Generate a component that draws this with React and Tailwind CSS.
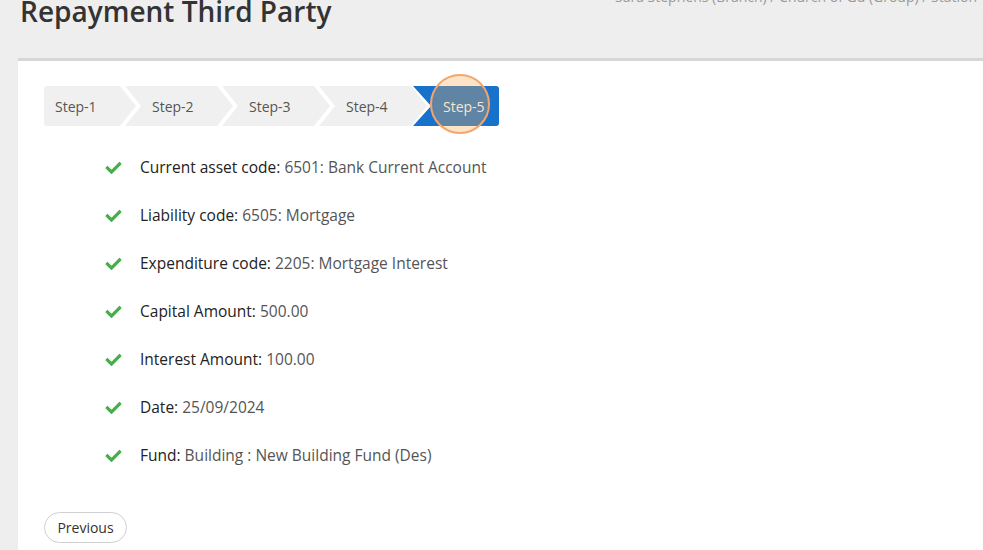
import React from "react";
import { FaCheck } from "react-icons/fa";

const rows = [
  ["Current asset code:", "6501: Bank Current Account"],
  ["Liability code:", "6505: Mortgage"],
  ["Expenditure code:", "2205: Mortgage Interest"],
  ["Capital Amount:", "500.00"],
  ["Interest Amount:", "100.00"],
  ["Date:", "25/09/2024"],
  ["Fund:", "Building : New Building Fund (Des)"],
];

export default function App() {
  return (
    <div
      className="w-[983px] h-[550px] overflow-hidden bg-[#efeeee] flex flex-col"
      style={{ fontFamily: '"Open Sans", "Liberation Sans", sans-serif' }}
    >
      <div className="flex h-[58px] shrink-0">
        <h1 className="ml-[20px] mt-[-3px] text-[28px] leading-none font-semibold text-[#333] whitespace-nowrap">
          Repayment Third Party
        </h1>
        <div className="ml-auto w-[368px] mt-[-10px] text-[14px] leading-none text-[#999] whitespace-nowrap overflow-hidden">
          Sara Stephens (Branch) / Church of Gd (Group) / Station
        </div>
      </div>
      <div className="ml-[18px] flex-1 bg-white border-t-[3px] border-[#d6d6d6] pl-[26px] pt-[25px]">
        <div className="relative flex h-[40px] text-[14px] text-[#555]">
          <div className="w-[92px] h-[40px] bg-[#f0f0f0] rounded-l-[3px] pl-[11px] flex items-center [clip-path:polygon(0_0,calc(100%_-_16px)_0,100%_50%,calc(100%_-_16px)_100%,0_100%)]">
            Step-1
          </div>
          {["Step-2", "Step-3", "Step-4"].map((s) => (
            <div
              key={s}
              className="-ml-[11px] w-[108px] h-[40px] bg-[#f0f0f0] pl-[27px] flex items-center [clip-path:polygon(0_0,calc(100%_-_16px)_0,100%_50%,calc(100%_-_16px)_100%,0_100%,16px_50%)]"
            >
              {s}
            </div>
          ))}
          <div className="-ml-[14px] w-[86px] h-[40px] bg-[#1872cb] text-white rounded-r-[3px] pl-[30px] flex items-center [clip-path:polygon(0_0,100%_0,100%_100%,0_100%,18px_50%)]">
            Step-5
          </div>
          <div className="absolute left-[386px] top-[-12px] w-[60px] h-[60px] rounded-full border-2 border-[#f3a66c] bg-[rgba(250,170,80,0.32)]" />
        </div>
        <div className="mt-[18px] ml-[60px] flex flex-col">
          {rows.map(([k, v]) => (
            <div key={k} className="h-[48px] flex items-center">
              <FaCheck className="w-[19px] h-[16px] text-[#45ad4a] shrink-0" />
              <div className="ml-[17px] text-[15.5px] text-[#555] whitespace-nowrap">
                <span className="font-medium text-[#222]">{k}</span> {v}
              </div>
            </div>
          ))}
        </div>
        <button className="mt-[32px] w-[83px] h-[31px] rounded-full border border-[#d0d0d0] bg-white text-[14px] text-[#333] flex items-center justify-center">
          Previous
        </button>
      </div>
    </div>
  );
}
